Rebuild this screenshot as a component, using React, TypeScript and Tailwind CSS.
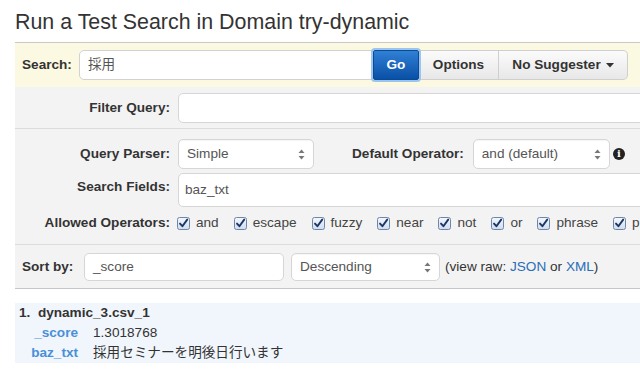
import React from "react";

const font = "font-['Liberation_Sans','Noto_Sans_CJK_JP',sans-serif]";

function SelectArrows() {
  return (
    <svg width="7" height="11" viewBox="0 0 7 11" className="shrink-0">
      <path d="M3.5 0.5 L6.5 4 L0.5 4 Z" fill="#777" />
      <path d="M3.5 10.5 L6.5 7 L0.5 7 Z" fill="#777" />
    </svg>
  );
}

function Select({ value, className }: { value: string; className: string }) {
  return (
    <div
      className={`flex items-center justify-between rounded-[5px] border border-[#d6d6d6] bg-white pl-[8px] pr-[8px] text-[13.6px] text-[#555] shadow-[inset_0_1px_1px_rgba(0,0,0,0.04)] ${className}`}
    >
      <span>{value}</span>
      <SelectArrows />
    </div>
  );
}

function Check() {
  return (
    <svg width="13" height="13" viewBox="0 0 13 13" className="shrink-0">
      <defs>
        <linearGradient id="cb" x1="0" y1="0" x2="0" y2="1">
          <stop offset="0" stopColor="#f4f8fd" />
          <stop offset="1" stopColor="#cfdcef" />
        </linearGradient>
      </defs>
      <rect x="0.5" y="0.5" width="12" height="12" rx="2" fill="url(#cb)" stroke="#6f86a8" />
      <path d="M3 6.6 L5.4 9.2 L10.2 2.6" fill="none" stroke="#1d3563" strokeWidth="1.9" strokeLinecap="round" strokeLinejoin="round" />
    </svg>
  );
}

const operators = ["and", "escape", "fuzzy", "near", "not", "or", "phrase", "prefix"];

export default function App() {
  return (
    <div className={`h-[382px] w-[640px] overflow-hidden bg-white text-[#333] ${font}`}>
      <div className="w-[720px] pl-[15px]">
        <h1 className="mb-[8px] pt-[10px] text-[21.4px] leading-[24px] font-normal text-[#333]">
          Run a Test Search in Domain try-dynamic
        </h1>

        {/* Search bar */}
        <div className="border-t border-[#c9c9c9] bg-[#fcf9e2] py-[7px] pl-[7px]">
          <div className="flex items-center">
            <span className="w-[57px] text-[13.6px] font-bold">Search:</span>
            <div className="flex h-[30px] w-[294px] items-center rounded-l-[5px] border border-[#d2d2d2] bg-white pl-[8px] text-[13.6px] text-[#555]">
              採用
            </div>
            <div className="flex h-[30px] items-stretch">
              <div className="relative flex w-[46px] items-center justify-center rounded-[2px] border border-[#0a4a96] bg-gradient-to-b from-[#2f80d6] to-[#0850a6] text-[13.6px] font-bold text-white shadow-[0_0_0_2px_#9cc4ec]">
                Go
              </div>
              <div className="flex w-[80px] items-center justify-center border-y border-r border-[#cfcfcf] bg-gradient-to-b from-[#fbfbfb] to-[#e8e8e8] text-[13.6px] font-bold text-[#333]">
                Options
              </div>
              <div className="flex w-[129px] items-center justify-center gap-[5px] rounded-r-[5px] border-y border-r border-[#cfcfcf] bg-gradient-to-b from-[#fbfbfb] to-[#e8e8e8] text-[13.6px] font-bold text-[#333]">
                No Suggester
                <svg width="8" height="5" viewBox="0 0 8 5">
                  <path d="M0 0 L8 0 L4 4.5 Z" fill="#333" />
                </svg>
              </div>
            </div>
          </div>
        </div>

        {/* Options */}
        <div className="border-b border-[#c6c6c6] bg-[#f3f3f3]">
          <div className="flex items-center border-b border-[#dcdcdc] pt-[6px] pb-[5px]">
            <span className="w-[155px] text-right text-[13.6px] font-bold">Filter Query:</span>
            <div className="ml-[8px] h-[30px] w-[520px] rounded-[5px] border border-[#d6d6d6] bg-white" />
          </div>

          <div className="border-b border-[#dcdcdc] pt-[10px] pb-[11px]">
            <div className="flex items-center">
              <span className="w-[155px] text-right text-[13.6px] font-bold">Query Parser:</span>
              <Select value="Simple" className="ml-[8px] h-[30px] w-[136px]" />
              <span className="ml-[38px] text-[13.6px] font-bold">Default Operator:</span>
              <Select value="and (default)" className="ml-[9px] h-[30px] w-[137px]" />
              <span className="ml-[3px] flex h-[12px] w-[12px] items-center justify-center rounded-full bg-[#222] text-[10px] leading-none font-bold text-white font-['DejaVu_Serif',serif]">
                i
              </span>
            </div>
            <div className="mt-[4px] flex items-start">
              <span className="w-[155px] pt-[4px] text-right text-[13.6px] font-bold">Search Fields:</span>
              <div className="ml-[8px] h-[34px] w-[520px] rounded-[5px] border border-[#d6d6d6] bg-white pt-[6px] pl-[6px] text-[13.6px] text-[#555]">
                baz_txt
              </div>
            </div>
            <div className="mt-[6px] flex h-[20px] items-center">
              <span className="w-[155px] text-right text-[13.6px] font-bold">Allowed Operators:</span>
              <div className="ml-[7px] flex items-center gap-[15px] text-[13.6px] text-[#444]">
                {operators.map((op) => (
                  <label key={op} className="flex items-center gap-[6px]">
                    <Check />
                    {op}
                  </label>
                ))}
              </div>
            </div>
          </div>

          <div className="flex items-center pt-[8px] pb-[7px] pl-[7px]">
            <span className="w-[62px] text-[13.6px] font-bold">Sort by:</span>
            <div className="flex h-[28px] w-[200px] items-center rounded-[5px] border border-[#d6d6d6] bg-white pl-[8px] text-[13.6px] text-[#555]">
              _score
            </div>
            <Select value="Descending" className="ml-[7px] h-[28px] w-[149px]" />
            <span className="ml-[5px] text-[13.6px] text-[#333]">
              (view raw: <a className="text-[#2a6db8]">JSON</a> or <a className="text-[#2a6db8]">XML</a>)
            </span>
          </div>
        </div>

        {/* Results */}
        <div className="mt-[14px] bg-[#f1f6fc] pl-[4px] text-[13.6px] leading-[20px]">
          <div className="font-bold">
            1.&nbsp;&nbsp;dynamic_3.csv_1
          </div>
          <div className="flex">
            <span className="w-[59px] text-right font-bold text-[#4a8fd8]">_score</span>
            <span className="ml-[15px] text-[#333]">1.3018768</span>
          </div>
          <div className="flex">
            <span className="w-[59px] text-right font-bold text-[#4a8fd8]">baz_txt</span>
            <span className="ml-[15px] text-[#333]">採用セミナーを明後日行います</span>
          </div>
        </div>
      </div>
    </div>
  );
}
